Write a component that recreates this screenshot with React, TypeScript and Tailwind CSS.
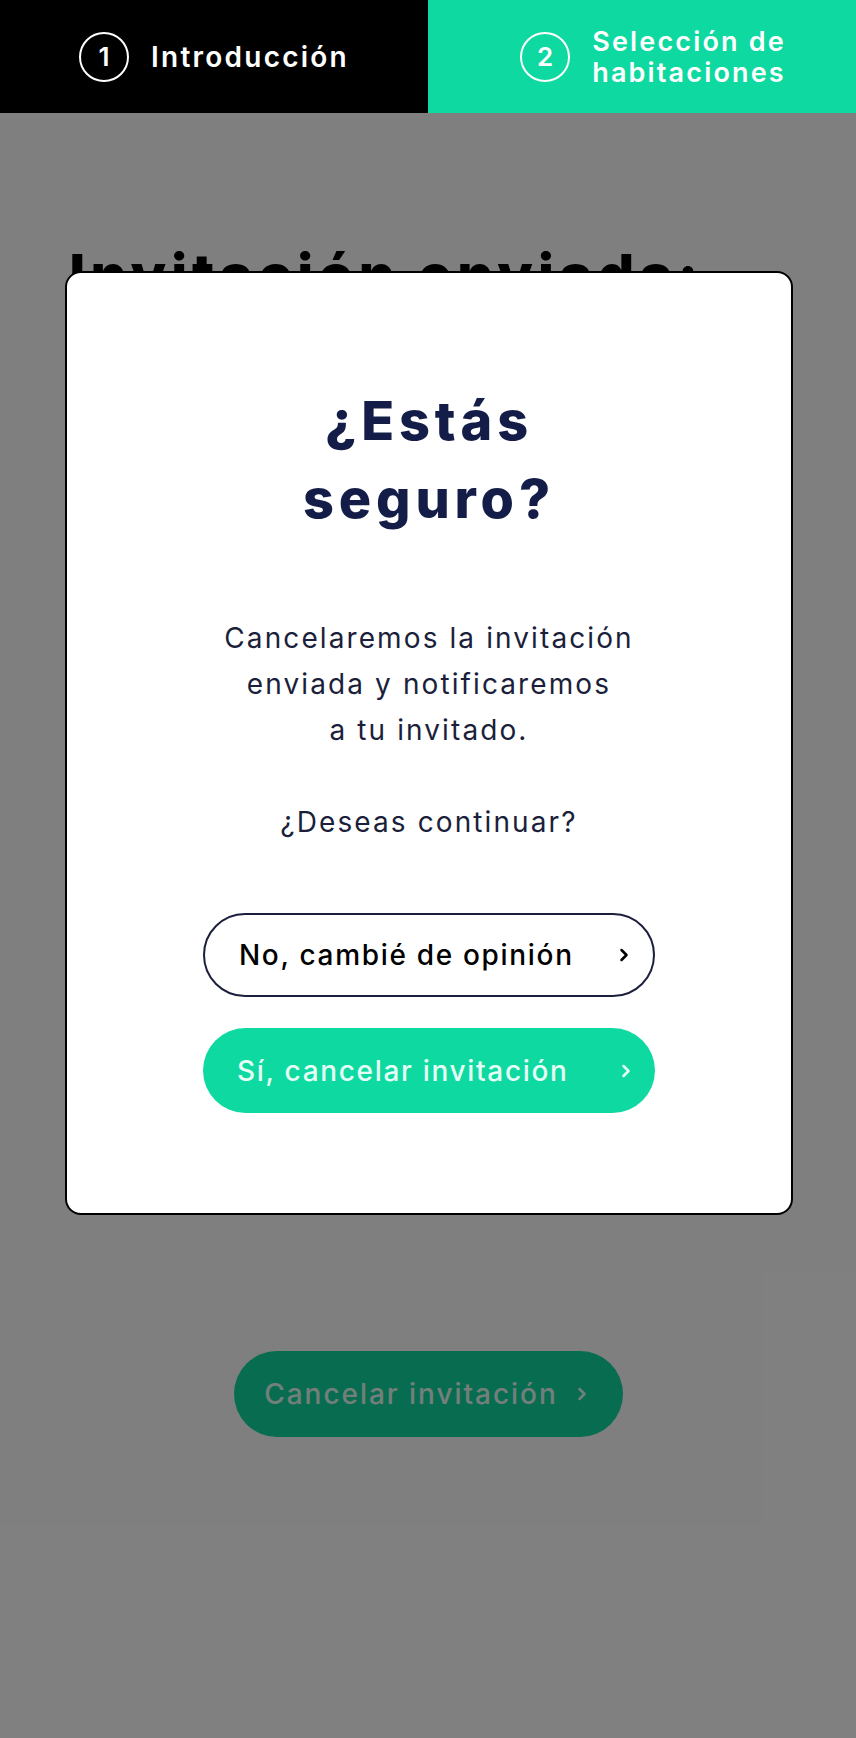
import { ChevronRight } from "lucide-react"

function StepBadge({ n }: { n: number }) {
  return (
    <div className="flex h-[50px] w-[50px] shrink-0 items-center justify-center rounded-full border-2 border-white text-[26px] font-semibold leading-none text-white">
      {n}
    </div>
  )
}

export default function App() {
  return (
    <div className="relative min-h-[1738px] bg-white font-['Inter',sans-serif]">
      <header className="relative z-20 grid h-[113px] grid-cols-2">
        <div className="flex items-center justify-center gap-[22px] bg-black">
          <StepBadge n={1} />
          <span className="text-[28px] font-semibold tracking-[0.08em] text-white">Introducción</span>
        </div>
        <div className="flex items-center justify-center gap-[22px] bg-[#0ed9a0] pl-[22px]">
          <StepBadge n={2} />
          <span className="text-[27px] font-semibold leading-[31px] tracking-[0.08em] text-white">
            Selección de
            <br />
            habitaciones
          </span>
        </div>
      </header>

      <main className="flex flex-col px-[69px] pt-[128px]">
        <h1 className="text-[58px] font-extrabold leading-[1.2] tracking-[0.08em] text-black">Invitación enviada:</h1>
        <div className="h-[1040px]" />
        <button className="mx-auto flex h-[86px] w-[389px] items-center justify-center gap-[14px] rounded-full bg-[#0ed9a0] text-[28px] font-medium tracking-[0.07em] text-[#e6fff6]">
          Cancelar invitación
          <ChevronRight size={20} strokeWidth={3} />
        </button>
      </main>

      {/* overlay under the header */}
      <div className="absolute inset-x-0 bottom-0 top-[113px] z-10 bg-black/50" />

      <div className="absolute left-[65px] top-[271px] z-30 flex h-[944px] w-[728px] flex-col items-center rounded-2xl border-2 border-black bg-white pt-[109px]">
        <h2 className="text-center text-[54px] font-extrabold leading-[78px] tracking-[0.09em] text-[#141d48]">
          ¿Estás
          <br />
          seguro?
        </h2>
        <p className="mt-[77px] text-center text-[28px] leading-[46px] tracking-[0.075em] text-[#1b1f3b]">
          Cancelaremos la invitación
          <br />
          enviada y notificaremos
          <br />
          a tu invitado.
          <br />
          <br />
          ¿Deseas continuar?
        </p>
        <div className="mt-[68px] flex flex-col gap-[31px]">
          <button className="flex h-[84px] w-[452px] items-center justify-between rounded-full border-2 border-[#1b1f3b] pl-[34px] pr-[19px] text-[28px] font-medium tracking-[0.06em] text-black">
            No, cambié de opinión
            <ChevronRight size={20} strokeWidth={3} />
          </button>
          <button className="flex h-[85px] w-[452px] items-center justify-between rounded-full bg-[#0ed9a0] pl-[34px] pr-[19px] text-[28px] font-medium tracking-[0.06em] text-[#e6fff6]">
            Sí, cancelar invitación
            <ChevronRight size={20} strokeWidth={3} />
          </button>
        </div>
      </div>
    </div>
  )
}
